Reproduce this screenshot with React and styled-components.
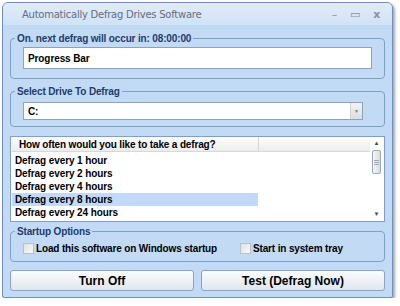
import React from 'react';
import styled, { createGlobalStyle } from 'styled-components';

const GlobalStyle = createGlobalStyle`
  html, body { margin: 0; padding: 0; background: #ffffff; }
  body { font-family: "Liberation Sans", Arial, sans-serif; }
`;

const Window = styled.div`
  margin: 2px 0 0 2px;
  width: 391px;
  height: 296px;
  box-sizing: border-box;
  border: 1px solid #6d8fb9;
  border-radius: 6px 6px 2px 2px;
  background: #c3daf5;
  box-shadow: 2px 2px 3px rgba(0, 0, 0, 0.35);
  display: flex;
  flex-direction: column;
  overflow: hidden;
`;

const TitleBar = styled.div`
  height: 22px;
  flex: none;
  display: flex;
  align-items: center;
  padding: 0 12px 0 19px;
  background: linear-gradient(#e2ecfa, #d0e2f6);
  color: #636f80;
  font-family: "DejaVu Sans", sans-serif;
  font-size: 10px;
  letter-spacing: -0.25px;
`;

const Title = styled.span`
  flex: 1;
`;

const Controls = styled.div`
  display: flex;
  gap: 13px;
  align-items: center;
  color: #8793a6;
  font-size: 11px;
`;

const Body = styled.div`
  flex: 1;
  display: flex;
  flex-direction: column;
  padding: 7px 7px 0 7px;
`;

const Group = styled.fieldset`
  margin: 0 0 ${p => p.gap}px 0;
  padding: ${p => p.pad};
  border: 1px solid #7f9fc9;
  border-radius: 4px;
  min-width: 0;
`;

const Legend = styled.legend`
  padding: 0 2px;
  margin-left: -8px;
  height: 13px;
  line-height: 13px;
  font-size: 10px;
  font-weight: bold;
  letter-spacing: -0.15px;
  color: #1d3c6b;
`;

const TextBox = styled.div`
  height: 22px;
  box-sizing: border-box;
  border: 1px solid #8aa3c4;
  background: #ffffff;
  display: flex;
  align-items: center;
  padding-left: 4px;
  font-size: 10px;
  font-weight: bold;
  letter-spacing: -0.1px;
  color: #000;
`;

const Combo = styled(TextBox)`
  margin-right: 9px;
  justify-content: space-between;
  padding-right: 0;
  height: 18px;
`;

const DropBtn = styled.div`
  width: 11px;
  height: 16px;
  background: linear-gradient(#f4f4f4, #dedede);
  border-left: 1px solid #d0d0d0;
  display: flex;
  align-items: center;
  justify-content: center;
  font-size: 5px;
  color: #6a7a90;
`;

const List = styled.div`
  height: 86px;
  flex: none;
  box-sizing: border-box;
  border: 1px solid #7f9fc9;
  background: #ffffff;
  display: flex;
  margin-top: 9px;
  margin-bottom: 3px;
`;

const ListMain = styled.div`
  flex: 1;
  display: flex;
  flex-direction: column;
  padding-left: 1px;
`;

const Header = styled.div`
  height: 14px;
  display: flex;
  margin-bottom: 2px;
  background: linear-gradient(#ffffff, #ececec);
  border-bottom: 1px solid #d8d8d8;
  font-size: 10px;
  font-weight: bold;
  letter-spacing: -0.15px;
  color: #000;
`;

const HeaderCell = styled.div`
  width: ${p => p.w}px;
  flex: ${p => (p.w ? 'none' : 1)};
  display: flex;
  align-items: center;
  padding-left: 7px;
  box-sizing: border-box;
  border-right: ${p => (p.w ? '1px solid #d6d6d6' : 'none')};
`;

const Row = styled.div`
  width: 246px;
  height: 13px;
  line-height: 13px;
  padding-left: 3px;
  box-sizing: border-box;
  font-size: 10px;
  font-weight: bold;
  letter-spacing: -0.1px;
  color: #000;
  background: ${p => (p.selected ? '#c2daf8' : 'transparent')};
`;

const ScrollBar = styled.div`
  width: 13px;
  margin-right: 1px;
  display: flex;
  flex-direction: column;
  align-items: center;
  background: #ffffff;
`;

const Arrow = styled.div`
  height: 13px;
  font-size: 6px;
  line-height: 13px;
  color: #3c4a5e;
`;

const Thumb = styled.div`
  width: 9px;
  height: 24px;
  box-sizing: border-box;
  border: 1px solid #9aa8ba;
  border-radius: 2px;
  background: linear-gradient(90deg, #f6f6f6, #dcdcdc);
  display: flex;
  flex-direction: column;
  align-items: center;
  justify-content: center;
  gap: 1px;
`;

const Grip = styled.div`
  width: 5px;
  height: 1px;
  background: #a0a8b4;
`;

const Spacer = styled.div`
  flex: 1;
`;

const Options = styled.div`
  display: flex;
  align-items: center;
  height: 14px;
`;

const Check = styled.label`
  display: flex;
  align-items: center;
  gap: 2px;
  width: ${p => (p.w ? `${p.w}px` : 'auto')};
  white-space: nowrap;
  font-size: 10px;
  font-weight: bold;
  letter-spacing: -0.15px;
  color: #000;
`;

const Box = styled.span`
  width: 9px;
  height: 9px;
  flex: none;
  border: 1px solid #b8c0cc;
  background: linear-gradient(135deg, #e0e0e0, #fafafa);
`;

const Buttons = styled.div`
  display: flex;
  gap: 7px;
`;

const Button = styled.button`
  flex: 1;
  height: 21px;
  border: 1px solid #8ba4c6;
  border-radius: 3px;
  background: linear-gradient(#fbfcfe, #dfe6ef);
  font-family: "Liberation Sans", Arial, sans-serif;
  font-size: 12px;
  font-weight: bold;
  color: #000;
  padding: 0;
`;

const rows = [
  'Defrag every 1 hour',
  'Defrag every 2 hours',
  'Defrag every 4 hours',
  'Defrag every 8 hours',
  'Defrag every 24 hours',
];

export default function App() {
  return (
    <>
      <GlobalStyle />
      <Window>
        <TitleBar>
          <Title>Automatically Defrag Drives Software</Title>
          <Controls>
            <span>–</span>
            <span>▭</span>
            <span style={{ fontWeight: 'bold' }}>x</span>
          </Controls>
        </TitleBar>
        <Body>
          <Group gap={6} pad="2px 12px 9px 12px">
            <Legend>On. next defrag will occur in: 08:00:00</Legend>
            <TextBox>Progress Bar</TextBox>
          </Group>
          <Group gap={0} pad="4px 12px 6px 12px">
            <Legend>Select Drive To Defrag</Legend>
            <Combo>
              C:
              <DropBtn>▼</DropBtn>
            </Combo>
          </Group>
          <List>
            <ListMain>
              <Header>
                <HeaderCell w={247}>How often would you like to take a defrag?</HeaderCell>
                <HeaderCell />
              </Header>
              {rows.map((r, i) => (
                <Row key={r} selected={i === 3}>{r}</Row>
              ))}
            </ListMain>
            <ScrollBar>
              <Arrow>▲</Arrow>
              <Thumb>
                <Grip />
                <Grip />
                <Grip />
              </Thumb>
              <Spacer />
              <Arrow>▼</Arrow>
            </ScrollBar>
          </List>
          <Group gap={8} pad="3px 12px 6px 12px">
            <Legend>Startup Options</Legend>
            <Options>
              <Check w={217}><Box />Load this software on Windows startup</Check>
              <Check><Box />Start in system tray</Check>
            </Options>
          </Group>
          <Buttons>
            <Button>Turn Off</Button>
            <Button>Test (Defrag Now)</Button>
          </Buttons>
        </Body>
      </Window>
    </>
  );
}
